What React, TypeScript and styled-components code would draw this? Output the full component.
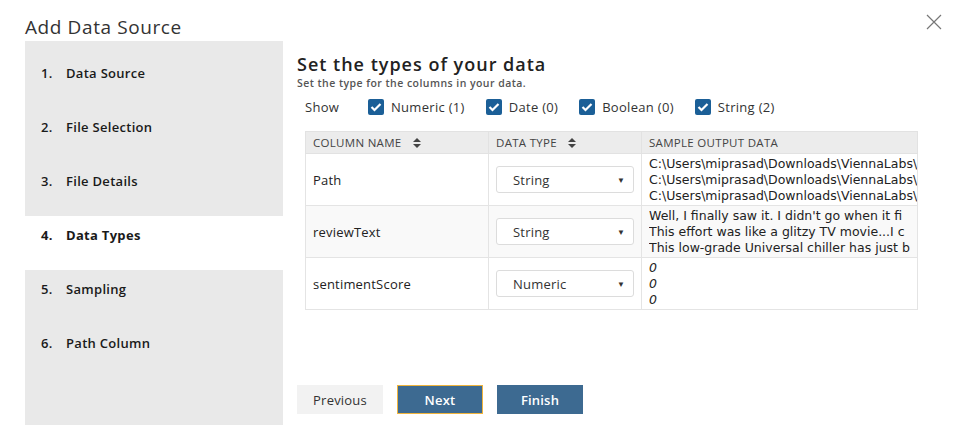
import React from 'react';
import styled, { createGlobalStyle } from 'styled-components';

const GlobalStyle = createGlobalStyle`
  html, body {
    margin: 0;
    padding: 0;
    background: #ffffff;
    font-family: "Open Sans", "Noto Sans", sans-serif;
    color: #222;
  }
`;

const Dialog = styled.div`
  width: 960px;
  height: 442px;
  box-sizing: border-box;
  padding: 14px 0 0 25px;
  position: relative;
  overflow: hidden;
`;

const Title = styled.h1`
  margin: 0;
  font-size: 19px;
  font-weight: 400;
  line-height: 27px;
  color: #333;
  letter-spacing: 0.6px;
`;

const CloseButton = styled.button`
  position: absolute;
  top: 12px;
  right: 16px;
  width: 20px;
  height: 20px;
  padding: 0;
  border: none;
  background: transparent;
  display: flex;
  align-items: center;
  justify-content: center;
`;

const Body = styled.div`
  display: flex;
  gap: 14px;
`;

const Steps = styled.ol`
  list-style: none;
  margin: 0;
  width: 258px;
  height: 384px;
  box-sizing: border-box;
  padding: 13px 0 0;
  background: #e9e9e9;
`;

const Step = styled.li<{ $active?: boolean }>`
  display: flex;
  height: 54px;
  box-sizing: border-box;
  padding: 10px 0 0 16px;
  background: ${(p) => (p.$active ? '#ffffff' : 'transparent')};
  font-size: 13px;
  letter-spacing: 0.3px;
  font-weight: ${(p) => (p.$active ? 700 : 600)};
  color: #1a1a1a;
  line-height: 19px;
`;

const StepNum = styled.span`
  width: 25px;
`;

const Main = styled.div`
  flex: 1;
  display: flex;
  flex-direction: column;
  padding-top: 12px;
`;

const Heading = styled.h2`
  margin: 0;
  font-size: 18px;
  font-weight: 600;
  line-height: 23px;
  letter-spacing: 1px;
  color: #222;
`;

const SubHeading = styled.p`
  margin: 1px 0 0;
  font-size: 10.5px;
  font-weight: 600;
  line-height: 12px;
  letter-spacing: 0.45px;
  color: #555;
`;

const ShowRow = styled.div`
  display: flex;
  align-items: center;
  margin: 8px 0 0 8px;
  height: 20px;
  font-size: 13px;
  letter-spacing: 0.3px;
  color: #333;
`;

const ShowLabel = styled.span`
  width: 63px;
`;

const Check = styled.label`
  display: flex;
  align-items: center;
  gap: 7px;
  margin-right: 21px;
`;

const Box = styled.span`
  width: 16px;
  height: 16px;
  border-radius: 2px;
  background: #1b5f97;
  display: flex;
  align-items: center;
  justify-content: center;
`;

const Table = styled.table`
  margin: 14px 0 0 8px;
  width: 612px;
  border-collapse: collapse;
  table-layout: fixed;
  font-size: 13px;
  letter-spacing: 0.2px;
  color: #222;
`;

const HeadCell = styled.th<{ $w: number }>`
  width: ${(p) => p.$w}px;
  height: 22px;
  box-sizing: border-box;
  padding: 0 7px;
  text-align: left;
  font-weight: 400;
  font-size: 11.5px;
  letter-spacing: 0.3px;
  color: #444;
  background: #ececec;
  border: 1px solid #e2e2e2;
  white-space: nowrap;
`;

const Row = styled.tr<{ $alt?: boolean }>`
  background: ${(p) => (p.$alt ? '#f9f9f9' : '#ffffff')};
`;

const Cell = styled.td`
  height: 52px;
  box-sizing: border-box;
  padding: 0 7px;
  border: 1px solid #e4e4e4;
  vertical-align: middle;
  overflow: hidden;
`;

const SampleCell = styled(Cell)`
  padding: 2px 0 0 7px;
  vertical-align: top;
`;

const SampleLine = styled.div<{ $italic?: boolean }>`
  white-space: nowrap;
  overflow: hidden;
  font-family: "DejaVu Sans", Verdana, sans-serif;
  font-size: 12.5px;
  letter-spacing: 0;
  line-height: 16px;
  font-style: ${(p) => (p.$italic ? 'italic' : 'normal')};
  color: #222;
`;

const Select = styled.div`
  height: 27px;
  box-sizing: border-box;
  border: 1px solid #dcdcdc;
  border-radius: 3px;
  background: #fff;
  display: flex;
  align-items: center;
  justify-content: space-between;
  padding: 0 8px 0 16px;
  color: #333;
`;

const Caret = styled.span`
  font-size: 8px;
  color: #333;
`;

const Buttons = styled.div`
  display: flex;
  gap: 14px;
  margin-top: 75px;
`;

const Button = styled.button<{ $primary?: boolean; $focused?: boolean }>`
  width: 86px;
  height: 29px;
  box-sizing: border-box;
  font-family: inherit;
  font-size: 13px;
  letter-spacing: 0.2px;
  border: 1px solid
    ${(p) => (p.$focused ? '#f0b43c' : p.$primary ? '#3d6a91' : '#f2f2f2')};
  background: ${(p) => (p.$primary ? '#3d6a91' : '#f2f2f2')};
  color: ${(p) => (p.$primary ? '#ffffff' : '#333')};
  font-weight: ${(p) => (p.$primary ? 600 : 400)};
`;

const SortIcon = () => (
  <svg width="8" height="10" viewBox="0 0 8 10" style={{ marginLeft: 11, verticalAlign: -1 }}>
    <path d="M4 0 L8 4 H0 Z M4 10 L8 6 H0 Z" fill="#444" />
  </svg>
);

const CheckMark = () => (
  <svg width="12" height="10" viewBox="0 0 12 10">
    <path d="M1.5 5 L4.5 8 L10.5 2" stroke="#fff" strokeWidth="2.2" fill="none" />
  </svg>
);

const steps = ['Data Source', 'File Selection', 'File Details', 'Data Types', 'Sampling', 'Path Column'];

const filters = ['Numeric (1)', 'Date (0)', 'Boolean (0)', 'String (2)'];

const rows = [
  {
    name: 'Path',
    type: 'String',
    samples: [
      'C:\\Users\\miprasad\\Downloads\\ViennaLabs\\',
      'C:\\Users\\miprasad\\Downloads\\ViennaLabs\\',
      'C:\\Users\\miprasad\\Downloads\\ViennaLabs\\',
    ],
  },
  {
    name: 'reviewText',
    type: 'String',
    samples: [
      "Well, I finally saw it. I didn't go when it fi",
      'This effort was like a glitzy TV movie...I c',
      'This low-grade Universal chiller has just b',
    ],
  },
  { name: 'sentimentScore', type: 'Numeric', samples: ['0', '0', '0'], italic: true },
];

export default function App() {
  return (
    <Dialog>
      <GlobalStyle />
      <Title>Add Data Source</Title>
      <CloseButton aria-label="Close">
        <svg width="16" height="16" viewBox="0 0 16 16">
          <path d="M1 1 L15 15 M15 1 L1 15" stroke="#777" strokeWidth="1.2" />
        </svg>
      </CloseButton>
      <Body>
        <Steps>
          {steps.map((s, i) => (
            <Step key={s} $active={i === 3}>
              <StepNum>{i + 1}.</StepNum>
              {s}
            </Step>
          ))}
        </Steps>
        <Main>
          <Heading>Set the types of your data</Heading>
          <SubHeading>Set the type for the columns in your data.</SubHeading>
          <ShowRow>
            <ShowLabel>Show</ShowLabel>
            {filters.map((f) => (
              <Check key={f}>
                <Box>
                  <CheckMark />
                </Box>
                {f}
              </Check>
            ))}
          </ShowRow>
          <Table>
            <thead>
              <tr>
                <HeadCell $w={183}>
                  COLUMN NAME
                  <SortIcon />
                </HeadCell>
                <HeadCell $w={153}>
                  DATA TYPE
                  <SortIcon />
                </HeadCell>
                <HeadCell $w={276}>SAMPLE OUTPUT DATA</HeadCell>
              </tr>
            </thead>
            <tbody>
              {rows.map((r, i) => (
                <Row key={r.name} $alt={i === 1}>
                  <Cell>{r.name}</Cell>
                  <Cell>
                    <Select>
                      {r.type}
                      <Caret>▼</Caret>
                    </Select>
                  </Cell>
                  <SampleCell>
                    {r.samples.map((s, j) => (
                      <SampleLine key={j} $italic={r.italic}>
                        {s}
                      </SampleLine>
                    ))}
                  </SampleCell>
                </Row>
              ))}
            </tbody>
          </Table>
          <Buttons>
            <Button>Previous</Button>
            <Button $primary $focused>
              Next
            </Button>
            <Button $primary>Finish</Button>
          </Buttons>
        </Main>
      </Body>
    </Dialog>
  );
}
